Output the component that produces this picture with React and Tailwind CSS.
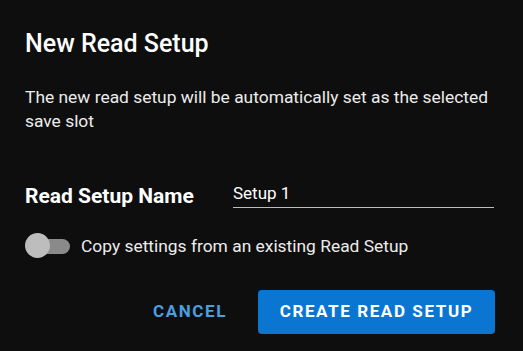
export default function App() {
    return (
        <div className="w-[523px] h-[351px] bg-[#0e0e0e] text-white font-['Roboto',sans-serif] px-[25px] pt-[29px]">
            <h2 className="text-[25px] font-medium leading-[30px]">New Read Setup</h2>

            <p className="mt-[26px] -mr-[12px] text-[17.4px] leading-[24px] text-[#ececec]">
                The new read setup will be automatically set as the selected save slot
            </p>

            <div className="mt-[50px] flex items-end">
                <div className="w-[208px] text-[21px] font-bold leading-[24px]">Read Setup Name</div>
                <div className="flex-1 border-b border-[#bdbdbd] pb-[4px] mr-[4px]">
                    <div className="text-[17px] leading-[20px]">Setup 1</div>
                </div>
            </div>

            <div className="mt-[25px] flex items-center">
                <div className="relative w-[46px] h-[26px] flex items-center">
                    <div className="ml-[12px] w-[33px] h-[15px] rounded-full bg-[#8a8a8a]" />
                    <div className="absolute left-0 top-0 w-[25px] h-[25px] rounded-full bg-[#bdbdbd]" />
                </div>
                <span className="ml-[10px] text-[17.4px] leading-[24px] text-[#ececec]">
                    Copy settings from an existing Read Setup
                </span>
            </div>

            <div className="mt-[31px] flex justify-end items-center gap-[31px] pr-[3px]">
                <button className="text-[17px] font-bold tracking-[1.6px] text-[#4a9fe0]">CANCEL</button>
                <button className="w-[237px] h-[44px] rounded-[4px] bg-[#0b76d1] text-[17px] font-bold tracking-[1.6px] text-white">
                    CREATE READ SETUP
                </button>
            </div>
        </div>
    );
}
